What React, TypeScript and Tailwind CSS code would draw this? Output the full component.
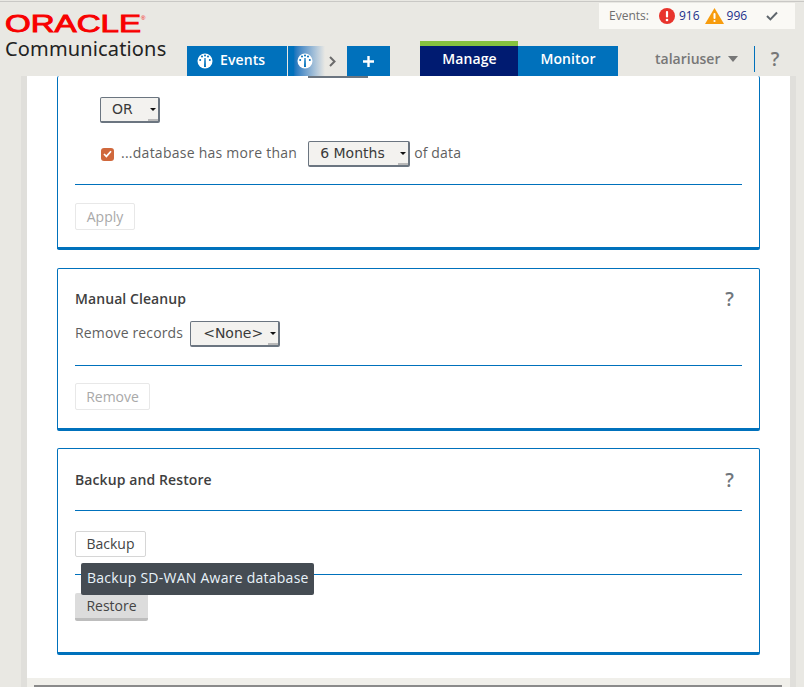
import React from "react";

const Gauge = ({ bg = "#0071bc" }: { bg?: string }) => (
    <svg width="16" height="16" viewBox="0 0 16 16" className="shrink-0">
        <circle cx="8" cy="8" r="7.5" fill="#fff" />
        <g fill={bg}>
            <circle cx="3.2" cy="7" r="1" />
            <circle cx="5" cy="3.6" r="1" />
            <circle cx="8" cy="2.6" r="1" />
            <circle cx="11" cy="3.6" r="1" />
            <circle cx="12.8" cy="7" r="1" />
            <path d="M7 14 7.4 5h1.2L9 14z" />
        </g>
    </svg>
);

const Select = ({ label, className }: { label: string; className: string }) => (
    <div
        className={`relative flex items-center h-[26px] pb-px rounded-[2px] border border-[#6b7580] border-r-2 border-b-2 bg-[#f3f2ef] font-['DejaVu_Sans',sans-serif] text-[14px] text-[#3a3a3a] ${className}`}
    >
        {label}
        <span className="absolute right-[2px] top-[10px] border-x-[3px] border-t-[3px] border-x-transparent border-t-[#111]" />
        <span className="absolute right-0 bottom-0 w-[10px] h-[2px] bg-[#b9b9b9]" />
    </div>
);

const Check = () => (
    <span className="flex items-center justify-center w-[13px] h-[13px] rounded-[3px] bg-[#d0683c]">
        <svg width="9" height="8" viewBox="0 0 9 8">
            <path d="M1 4l2.4 2.4L8 1.2" fill="none" stroke="#fff" strokeWidth="1.7" />
        </svg>
    </span>
);

const Help = () => (
    <span className="mt-[2px] text-[19px] leading-none font-semibold text-[#6f767c]">?</span>
);

const Rule = ({ className = "" }: { className?: string }) => (
    <div className={`h-px bg-[#0071bc] ${className}`} />
);

const Card = ({ className, children }: { className: string; children: React.ReactNode }) => (
    <section
        className={`mx-[30px] w-[703px] border border-[#0071bc] border-b-[3px] rounded-[2px] px-[17px] ${className}`}
    >
        {children}
    </section>
);

const App: React.FC = () => {
    return (
        <div className="relative h-[687px] w-[804px] overflow-hidden bg-[#e9e8e3] font-['Open_Sans',sans-serif] text-[14px] text-[#5f5f5f]">
            <div className="h-px mt-px bg-[#c9c8c5]" />
            <header className="flex h-[74px]">
                <div className="w-[187px] pl-[5px] pt-[10px]">
                    <svg width="145" height="24" viewBox="0 0 145 24" className="block">
                        <text
                            x="0"
                            y="20"
                            fill="#f80000"
                            stroke="#f80000"
                            strokeWidth="0.9"
                            fontFamily="Liberation Sans"
                            fontSize="23"
                            textLength="136"
                            lengthAdjust="spacingAndGlyphs"
                        >
                            ORACLE
                        </text>
                        <text x="136" y="8" fill="#f80000" fontFamily="Liberation Sans" fontSize="6">
                            ®
                        </text>
                    </svg>
                    <div className="mt-px text-[20px] leading-[24px] tracking-[0.15px] text-[#222] font-['Noto_Sans',sans-serif]">
                        Communications
                    </div>
                </div>
                <div className="flex-1 flex flex-col">
                    <div className="flex justify-end pr-[9px] pt-px">
                        <div className="flex items-center w-[196px] h-[26px] pl-[10px] bg-[#faf9f5] text-[12px] text-[#6f6f6f]">
                            <span>Events:</span>
                            <svg width="16" height="16" viewBox="0 0 16 16" className="ml-[10px]">
                                <circle cx="8" cy="8" r="8" fill="#e8342c" />
                                <rect x="6.9" y="3" width="2.2" height="6.5" rx="1" fill="#fff" />
                                <circle cx="8" cy="12" r="1.3" fill="#fff" />
                            </svg>
                            <span className="ml-[4px] text-[#1a2f8a]">916</span>
                            <svg width="19" height="16" viewBox="0 0 19 16" className="ml-[5px]">
                                <path d="M9.5 0 19 16H0z" fill="#f79c0d" />
                                <rect x="8.5" y="5" width="2" height="6" rx="1" fill="#fff" />
                                <circle cx="9.5" cy="13" r="1.1" fill="#fff" />
                            </svg>
                            <span className="ml-[3px] text-[#1a2f8a]">996</span>
                            <svg width="12" height="10" viewBox="0 0 12 10" className="ml-[19px]">
                                <path d="M1 5l3.4 3.4L11 1.5" fill="none" stroke="#5f666c" strokeWidth="2" />
                            </svg>
                        </div>
                    </div>
                    <nav className="flex items-end flex-1 font-semibold text-white">
                        <div className="flex items-center w-[100px] h-[30px] pl-[10px] gap-[7px] bg-[#0071bc]">
                            <Gauge />
                            <span className="pb-[3px] tracking-[0.1px]">Events</span>
                        </div>
                        <div className="flex items-center w-[37px] h-[30px] ml-px pl-[9px] bg-gradient-to-r from-[#0071bc] from-[15%] to-[#e9e8e3]">
                            <Gauge />
                        </div>
                        <div className="flex items-center justify-center w-[22px] h-[30px] pr-[8px]">
                            <svg width="7" height="11" viewBox="0 0 7 11">
                                <path d="M1 1l4.5 4.5L1 10" fill="none" stroke="#6b6b6b" strokeWidth="2" />
                            </svg>
                        </div>
                        <div className="flex items-center justify-center w-[43px] h-[30px] bg-[#0071bc]">
                            <svg width="11" height="11" viewBox="0 0 11 11">
                                <path d="M5.5 0v11M0 5.5h11" stroke="#fff" strokeWidth="2.4" />
                            </svg>
                        </div>
                        <div className="ml-[30px] flex justify-center w-[98px] h-[35px] pl-px border-t-[5px] border-[#85c13f] bg-[#001b71]">
                            <span className="mt-[3px] leading-[20px] tracking-[0.1px]">Manage</span>
                        </div>
                        <div className="flex justify-center w-[100px] h-[30px] bg-[#0071bc]">
                            <span className="mt-[3px] leading-[20px] tracking-[0.1px]">Monitor</span>
                        </div>
                        <div className="flex items-center h-[30px] ml-[37px] pb-[6px] text-[#777]">
                            talariuser
                            <span className="ml-[8px] mt-[2px] border-x-[5px] border-t-[6px] border-x-transparent border-t-[#777]" />
                        </div>
                        <div className="relative flex items-center justify-center w-[41px] h-[30px] pb-[4px] ml-[16px]">
                            <span className="absolute left-0 top-0 w-px h-[26px] bg-[#0071bc]" />
                            <span className="text-[19px] leading-none text-[#777]">?</span>
                        </div>
                    </nav>
                </div>
            </header>
            <div className="ml-[21px] w-[775px] h-[611px] px-[6px] bg-[#e0dfdb]">
                <main className="h-[602px] bg-white overflow-hidden">
                    <Card className="h-[174px] border-t-0 pl-[42px]">
                        <div className="h-[2px] ml-[208px] w-[60px] border-b-2 border-[#6b7580]" />
                        <Select label="OR" className="mt-[19px] w-[60px] pl-[11px]" />
                        <div className="mt-[18px] flex items-center">
                            <span className="ml-px">
                                <Check />
                            </span>
                            <span className="ml-[7px] pb-[4px] tracking-[0.25px]">...database has more than</span>
                            <Select label="6 Months" className="ml-[11px] w-[102px] pl-[11px]" />
                            <span className="ml-[4px] pb-[4px] tracking-[0.15px]">of data</span>
                        </div>
                        <Rule className="mt-[17px] -ml-[25px] w-[667px]" />
                        <button className="mt-[18px] -ml-[25px] block h-[27px] w-[60px] rounded-[2px] border border-[#e8e8e8] text-[#a9a9a9]">
                            Apply
                        </button>
                    </Card>
                    <Card className="mt-[18px] h-[163px]">
                        <div className="flex justify-between pt-[19px] pr-[8px] h-[41px]">
                            <h2 className="font-semibold text-[#3f3f3f] tracking-[0.08px]">Manual Cleanup</h2>
                            <Help />
                        </div>
                        <div className="mt-[11px] flex items-center">
                            <span className="pb-[3px] tracking-[0.15px]">Remove records</span>
                            <Select label="<None>" className="ml-[7px] w-[90px] pl-[12px]" />
                        </div>
                        <Rule className="mt-[18px] w-[667px]" />
                        <button className="mt-[17px] block h-[27px] w-[75px] rounded-[2px] border border-[#e8e8e8] text-[#a9a9a9]">
                            Remove
                        </button>
                    </Card>
                    <Card className="relative mt-[17px] h-[207px]">
                        <div className="flex justify-between pt-[20px] pr-[8px] h-[61px]">
                            <h2 className="font-semibold text-[#3f3f3f] tracking-[0.1px]">Backup and Restore</h2>
                            <Help />
                        </div>
                        <Rule className="w-[667px]" />
                        <button className="mt-[20px] block h-[26px] w-[71px] pb-[2px] rounded-[2px] border border-[#d6d6d6] text-[#444]">
                            Backup
                        </button>
                        <Rule className="mt-[17px] w-[667px]" />
                        <button className="mt-[18px] block h-[28px] w-[73px] rounded-[2px] border-b-[3px] border-[#bdbdbd] bg-[#dcdcdc] text-[#444]">
                            Restore
                        </button>
                        <div className="absolute left-[23px] top-[114px] flex items-center h-[32px] w-[233px] pl-[6px] pb-[3px] rounded-[2px] bg-[#454c53] text-[#e9f3fa] tracking-[0.25px] whitespace-nowrap">
                            Backup SD-WAN Aware database
                        </div>
                    </Card>
                </main>
                <div className="h-[9px] px-[7px] flex flex-col justify-end bg-[#f0efea]">
                    <div className="h-[2px] mr-px bg-[#8a8a8a]" />
                </div>
            </div>
        </div>
    );
};

export default App;
